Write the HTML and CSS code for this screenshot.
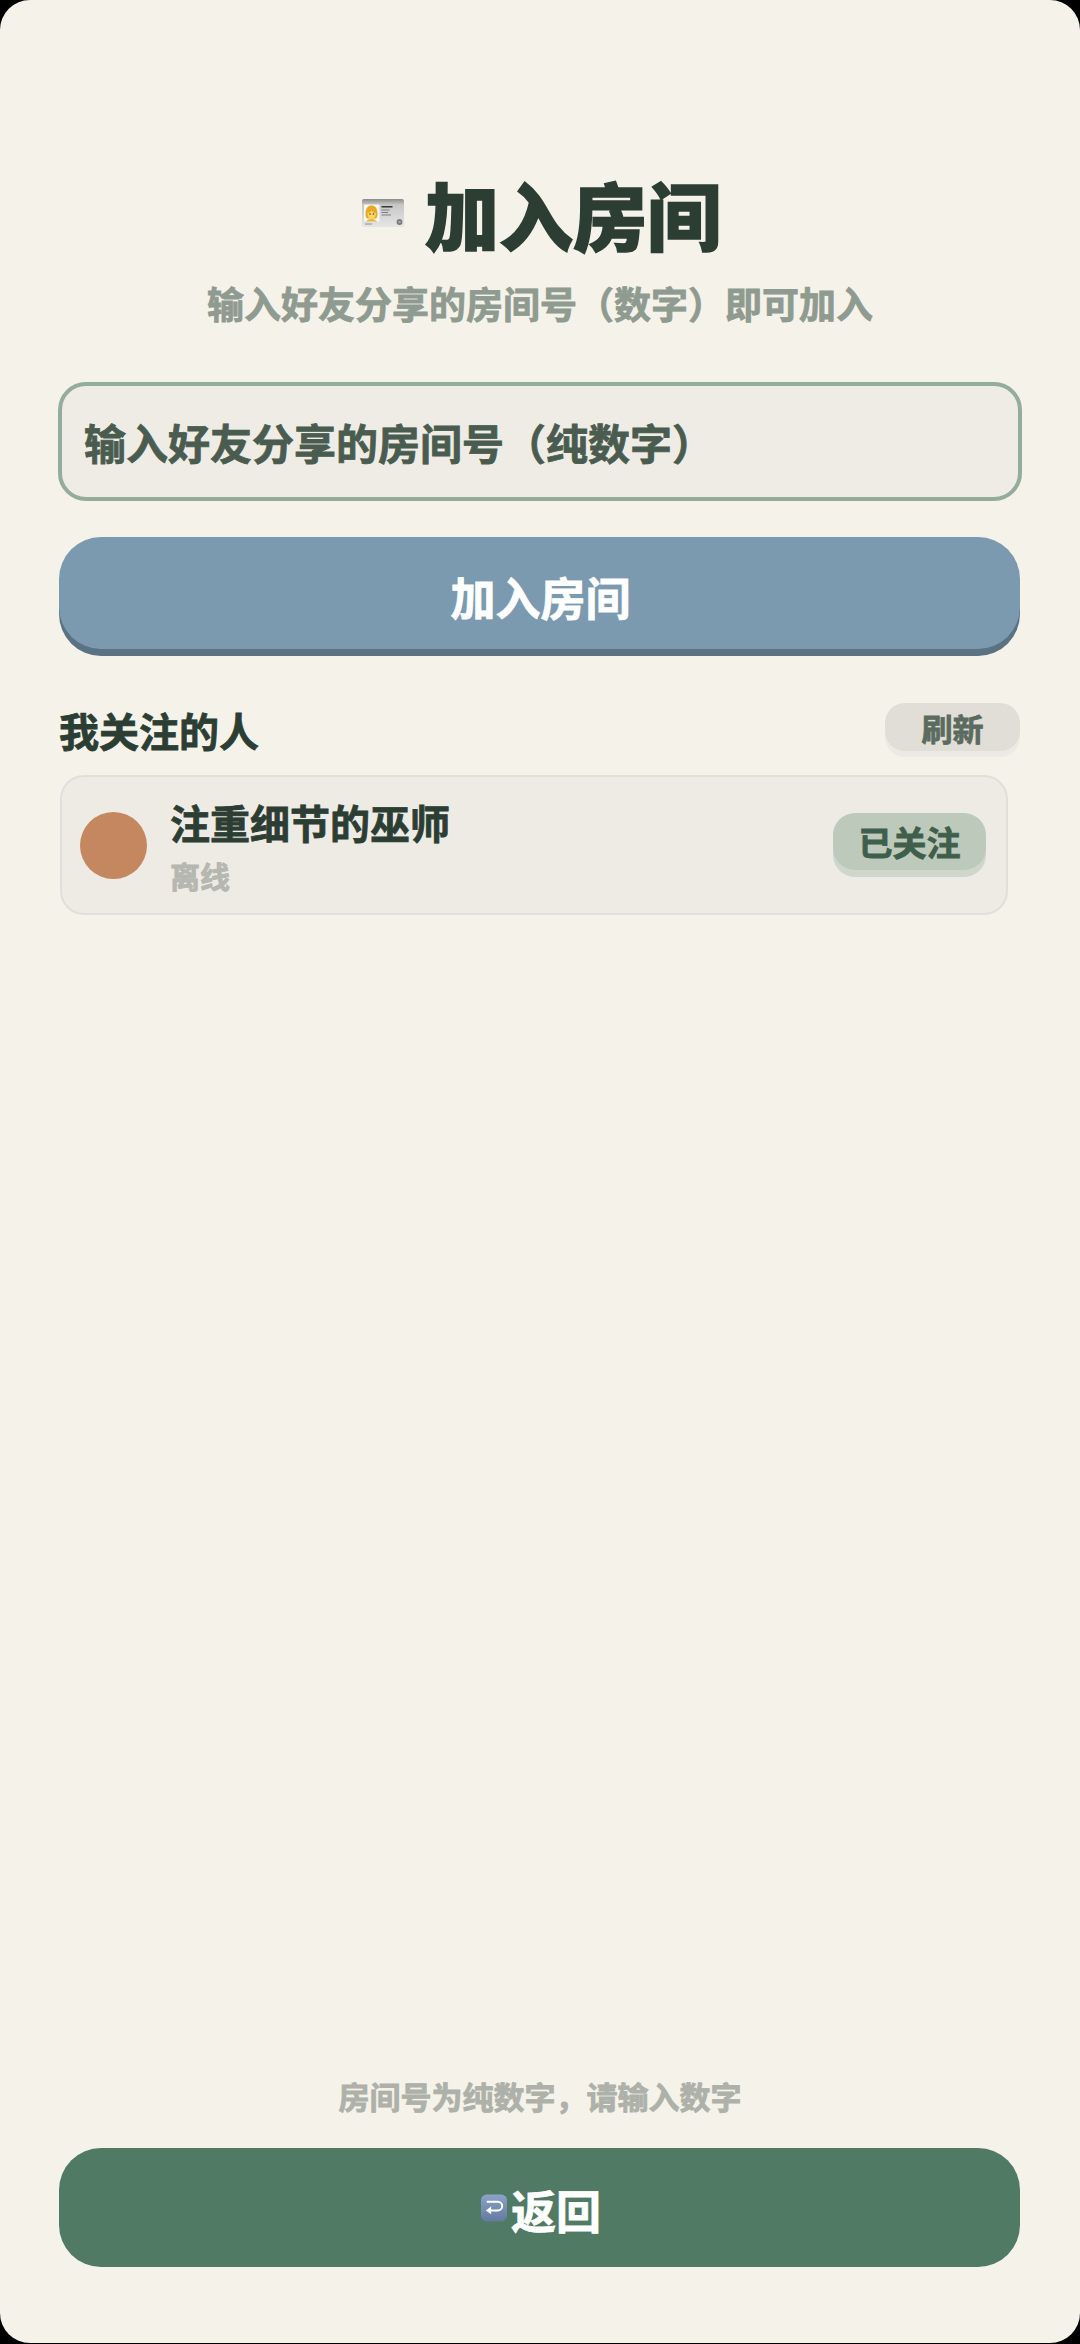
FILE: index.html
```html
<!DOCTYPE html>
<html lang="zh-CN">
<head>
    <meta charset="UTF-8">
    <meta name="viewport" content="width=device-width, initial-scale=1.0">
    <title>加入房间</title>
    <link rel="stylesheet" href="styles.css">
</head>
<body>

    <div class="screen">
        <div class="title-row">
            <svg class="id-icon" viewBox="0 0 42 28" aria-hidden="true">
                <defs>
                    <linearGradient id="cardFill" x1="0" y1="0" x2="0" y2="1">
                        <stop offset="0" stop-color="#8a8a88"/>
                        <stop offset="0.2" stop-color="#c6c6c5"/>
                        <stop offset="1" stop-color="#e6e6e6"/>
                    </linearGradient>
                </defs>
                <rect width="42" height="28" rx="2" fill="url(#cardFill)"/>
                <rect x="2" y="5.500" width="15.500" height="17" fill="#f6f6f4"/>
                <path d="M3.500 15c0-6 2.500-8.500 6-8.500s6 2.500 6 8.500c0 2-.5 3.500-1.500 4.500h-9c-1-1-1.500-2.500-1.500-4.500z" fill="#e9a825"/>
                <path d="M5.500 14c1.500 0 3-1 4-2.500 1 1.500 2.500 2.500 4.500 2.500 0 3-2 6-4.500 6s-4-3-4-6z" fill="#fbd65e"/>
                <circle cx="8" cy="15" r="0.800" fill="#5a3d1c"/>
                <circle cx="11.500" cy="15" r="0.800" fill="#5a3d1c"/>
                <path d="M4 22.500c1.500-2 3.500-2.500 5.500-2.500s4 .5 5.500 2.500z" fill="#e8b93a"/>
                <path d="M19.500 11h8M19.500 13.500h6.500M19.500 16h9.500" stroke="#6a6b6e" stroke-width="0.800"/>
                <path d="M19.500 7.800h11" stroke="#1f1f22" stroke-width="1.300"/>
                <path d="M3 25h7" stroke="#77787a" stroke-width="0.800"/>
                <circle cx="37.500" cy="23" r="2.900" fill="#77797b"/>
                <circle cx="37.500" cy="23" r="1.300" fill="#a5a7a8"/>
            </svg>
            <h1 class="title">加入房间</h1>
        </div>
        <p class="subtitle">输入好友分享的房间号（数字）即可加入</p>

        <input class="room-input" type="text" inputmode="numeric" placeholder="输入好友分享的房间号（纯数字）">
        <button class="join-btn" type="button">加入房间</button>

        <div class="section-head">
            <h2 class="section-title">我关注的人</h2>
            <button class="refresh-btn" type="button">刷新</button>
        </div>

        <div class="follow-card">
            <div class="avatar"></div>
            <div class="follow-info">
                <div class="follow-name">注重细节的巫师</div>
                <div class="follow-status">离线</div>
            </div>
            <button class="followed-btn" type="button">已关注</button>
        </div>

        <div class="footer">
            <p class="hint">房间号为纯数字，请输入数字</p>
            <button class="back-btn" type="button">
                <svg class="back-icon" viewBox="0 0 28 28" aria-hidden="true">
                    <defs>
                        <linearGradient id="backFill" x1="0" y1="0" x2="0" y2="1">
                            <stop offset="0" stop-color="#8ba3c9"/>
                            <stop offset="1" stop-color="#64799f"/>
                        </linearGradient>
                    </defs>
                    <rect width="27" height="28" rx="6" fill="url(#backFill)"/>
                    <path d="M6 7.500h11.500a4.500 4.500 0 0 1 0 9H9" fill="none" stroke="#fff" stroke-width="2"/>
                    <path d="M10.500 12.500v8L5 16.500z" fill="#fff"/>
                </svg>
                <span class="back-label">返回</span>
            </button>
        </div>
    </div>

</body>
</html>
```

FILE: styles.css
```css
* {
    box-sizing: border-box;
}

html, body {
    height: 100%;
}

body {
    margin: 0;
    background-color: #000;
    font-family: "Noto Sans CJK SC", "Noto Sans", sans-serif;
    font-weight: 700;
    -webkit-text-stroke: 0.8px currentColor;
}

button, input {
    font-family: inherit;
    font-weight: 700;
    border: none;
    -webkit-text-stroke: inherit;
}

.screen {
    display: flex;
    flex-direction: column;
    height: 2343px;
    padding: 166px 60px 76px;
    background-color: #f5f2e9;
    border-radius: 30px;
}

.title-row {
    display: flex;
    justify-content: center;
    align-items: center;
    gap: 21px;
    padding-left: 3px;
}

.id-icon {
    width: 42px;
    height: 28px;
}

.title {
    margin: 0;
    font-size: 74px;
    line-height: 94px;
    font-weight: 900;
    color: #2c3e34;
    -webkit-text-stroke: 1.5px currentColor;
}

.subtitle {
    margin: 18px 0 0;
    font-size: 37px;
    line-height: 50px;
    text-align: center;
    color: #8f9a90;
}

.room-input {
    width: 964px;
    height: 119px;
    margin-top: 54px;
    margin-left: -2px;
    padding: 0 22px;
    font-size: 42px;
    color: #2c3e34;
    background-color: #efece5;
    border: 4px solid #94ac9a;
    border-radius: 28px;
}

.room-input::placeholder {
    color: #4a5c50;
    opacity: 1;
}

.join-btn {
    width: 961px;
    height: 112px;
    margin-top: 36px;
    margin-bottom: 7px;
    margin-left: -1px;
    padding: 6px 0 0 2px;
    font-size: 45px;
    color: #fff;
    background-color: #7b9aaf;
    border-radius: 42px;
    box-shadow: 0 7px 0 #5b7282;
}

.section-head {
    display: flex;
    justify-content: space-between;
    align-items: flex-start;
    width: 960px;
    margin-top: 47px;
}

.section-title {
    margin: 0 0 0 -1px;
    font-size: 40px;
    line-height: 54px;
    color: #2c3e34;
}

.refresh-btn {
    width: 135px;
    height: 48px;
    padding: 0;
    margin-bottom: 6px;
    font-size: 31px;
    color: #5c6b60;
    background-color: #e0ded7;
    border-radius: 20px;
    box-shadow: 0 6px 0 #eceae3;
}

.follow-card {
    display: flex;
    align-items: center;
    width: 948px;
    height: 140px;
    margin-top: 18px;
    padding: 0 20px 0 18px;
    background-color: #eeebe4;
    border: 2px solid #e2dfd8;
    border-radius: 24px;
}

.avatar {
    flex: none;
    width: 67px;
    height: 67px;
    background-color: #c4875f;
    border-radius: 50%;
}

.follow-info {
    flex: 1;
    margin-left: 23px;
}

.follow-name {
    font-size: 40px;
    line-height: 54px;
    color: #2c3e34;
}

.follow-status {
    margin-top: 6px;
    font-size: 30px;
    line-height: 40px;
    color: #b5b7b0;
}

.followed-btn {
    flex: none;
    width: 153px;
    height: 57px;
    margin-bottom: 7px;
    padding: 0;
    font-size: 34px;
    color: #3f5e4c;
    background-color: #bdcabb;
    border-radius: 22px;
    box-shadow: 0 7px 0 #cfd6ca;
}

.footer {
    margin-top: auto;
}

.hint {
    margin: 0;
    font-size: 31px;
    line-height: 42px;
    text-align: center;
    color: #adb1a9;
}

.back-btn {
    display: flex;
    justify-content: center;
    align-items: center;
    gap: 3px;
    width: 961px;
    height: 119px;
    margin-top: 31px;
    margin-left: -1px;
    padding: 0 0 0 3px;
    font-size: 45px;
    color: #fff;
    background-color: #507a63;
    border-radius: 42px;
}

.back-icon {
    width: 27px;
    height: 28px;
}

.back-label {
    padding-top: 3px;
}
```
